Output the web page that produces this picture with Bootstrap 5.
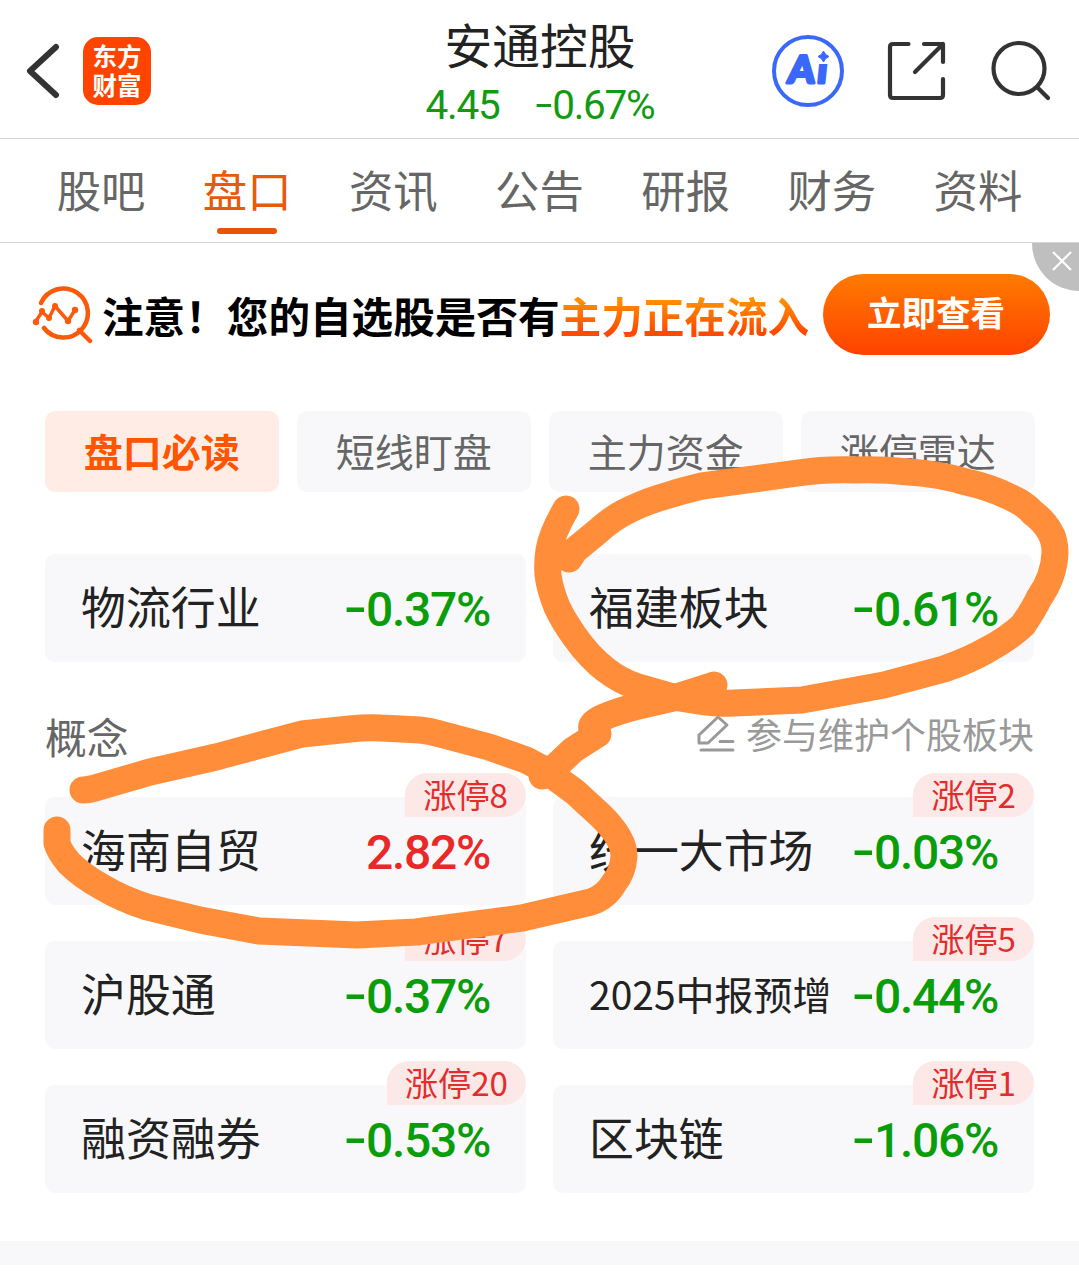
<!DOCTYPE html>
<html lang="zh-CN">
<head>
<meta charset="utf-8">
<meta name="viewport" content="width=device-width, initial-scale=1">
<title>安通控股</title>
<link href="https://cdn.jsdelivr.net/npm/bootstrap@5.3.0/dist/css/bootstrap.min.css" rel="stylesheet">
<style>
body{font-family:"Noto Sans CJK SC",sans-serif;color:#222;background:#fff;line-height:1;overflow:hidden}
.screen{width:1079px;height:1278px;overflow:hidden}
.topbar{height:139px;border-bottom:1px solid #d5d5d5;padding:0 28px 0 26px}
.side-box{width:330px;height:142px}
.left-box{width:333px}
.logo-box{width:68px;height:68px;border-radius:15px;background:#ff4400;color:#fff;font-weight:700;font-size:24.5px;line-height:29px;padding-top:4px;margin-left:23px}
.stock-name{font-size:47.7px;line-height:60px;padding-top:14px}
.quote{font-family:Roboto,"Noto Sans CJK SC",sans-serif;font-size:40.5px;line-height:44px;color:#129a12;gap:36px;margin-top:9px;letter-spacing:-1.3px}
.minus{display:inline-block;transform:translateY(-2px) scaleX(1.4);margin-left:3px;margin-right:3.5px}
.quote .minus{transform:translateY(-1px) scaleX(1.5);margin-right:4px}
.ai-icon{margin-left:51px}
.tabs-row{height:104px;border-bottom:1px solid #d5d5d5;padding:0 28px}
.tabs-row .nav-link{padding:0;font-size:44.4px;line-height:99px;color:#666;height:103px}
.tabs-row .nav-link.active{color:#e65a0c}
.tabs-row .nav-link.active::after{content:"";position:absolute;left:50%;margin-left:-30px;top:89px;width:60px;height:6px;border-radius:3px;background:#e85405}
.promo{height:168px;padding:0 29.5px 24.5px 32px}
.promo-text{font-size:41.6px;font-weight:700;color:#000;margin-left:9px;line-height:60px}
.hot{background:linear-gradient(#ff9000 25%,#ff4a00 78%);-webkit-background-clip:text;background-clip:text;color:transparent}
.promo-btn{width:227px;height:81px;border-radius:41px;background:linear-gradient(#ff7b00,#ff4200);color:#fff;font-size:34.5px;font-weight:700;line-height:75px}
.closer{top:0;right:0}
.pills{padding:0 44.5px 0 45px;gap:18.5px}
.pill-item{flex:1 1 0;height:81px;border-radius:10px;background:#f8f8fa;color:#666;font-size:39px;line-height:79px}
.pill-item.on{background:#ffede5;color:#ff5500;font-weight:700}
.cells{display:grid;grid-template-columns:481px 481px;column-gap:27px;row-gap:36px;padding:0 45px}
.cell{height:108px;border-radius:10px;background:#f8f8fa;padding:0 36px}
.cell-name{font-size:44.9px;line-height:104px;white-space:nowrap}
.cell-name.slim{font-size:39px}
.pct{font-family:Roboto,"Noto Sans CJK SC",sans-serif;font-size:48px;font-weight:500;line-height:111px;letter-spacing:-1.3px;color:#0a9d0a;white-space:nowrap}
.pct.up{color:#ea2828}
.limit{top:-24px;right:0;height:44px;border-radius:22px 22px 22px 0;background:#fde8e8;color:#e22d2d;font-size:33.2px;line-height:42px;padding:0 18px;white-space:nowrap}
.concept{height:135px;padding:0 45px}
.concept-title{font-size:41.8px;color:#666;line-height:60px;padding-top:44px}
.maintain{font-size:36px;color:#999;line-height:60px;padding-top:41px;gap:11px}
.band{height:24px;background:#f8f8fa;margin-top:48px}
.ink{left:0;top:0;pointer-events:none}
</style>
</head>
<body>
<div class="screen position-relative">
  <header class="topbar d-flex align-items-start">
    <div class="side-box left-box d-flex align-items-center">
      <svg width="34" height="56" viewBox="0 0 34 56" fill="none" stroke="#333" stroke-width="6" stroke-linecap="round" stroke-linejoin="round"><path d="M30 4 4 28 30 52"/></svg>
      <div class="logo-box text-center">东方<br>财富</div>
    </div>
    <div class="text-center flex-fill">
      <div class="stock-name">安通控股</div>
      <div class="quote d-flex justify-content-center"><span>4.45</span><span><span class="minus">-</span>0.67%</span></div>
    </div>
    <div class="side-box d-flex align-items-center">
      <svg class="ai-icon" width="72" height="72" viewBox="0 0 72 72"><text transform="translate(15 48) skewX(-6)" font-family="Lato" font-weight="900" font-size="38" letter-spacing="2.500" fill="#3a68fa" stroke="#3a68fa" stroke-width="3" stroke-linejoin="round">Ai</text><path d="M43 10H62V29H43Z" fill="#fff"/><path d="M51.500 16Q53 20 57 21.500Q53 23 51.500 27Q50 23 46 21.500Q50 20 51.500 16Z" fill="#3a68fa" stroke="#3a68fa"/><circle cx="36" cy="36" r="34" fill="none" stroke="#3a68fa" stroke-width="4"/></svg>
      <svg class="ms-auto" style="margin-right:43px" width="60" height="60" viewBox="0 0 60 60" fill="none" stroke="#333" stroke-width="4.200" stroke-linecap="round" stroke-linejoin="round"><path d="M21.500 3H6Q3 3 3 6V54Q3 57 6 57H53Q56 57 56 54V38M37 3H56V21M56 3 28 31"/></svg>
      <svg width="61" height="62" viewBox="0 0 61 62" fill="none" stroke="#333" stroke-width="4.200" stroke-linecap="round"><circle cx="29" cy="28.500" r="25.500"/><path d="M47.500 47.500 58 58"/></svg>
    </div>
  </header>
  <nav class="tabs-row nav nav-fill flex-nowrap">
    <a class="nav-link nav-item col">股吧</a>
    <a class="nav-link nav-item col active position-relative">盘口</a>
    <a class="nav-link nav-item col">资讯</a>
    <a class="nav-link nav-item col">公告</a>
    <a class="nav-link nav-item col">研报</a>
    <a class="nav-link nav-item col">财务</a>
    <a class="nav-link nav-item col">资料</a>
  </nav>
  <section class="promo d-flex align-items-center position-relative">
    <svg width="61" height="58" viewBox="0 0 61 58" fill="none" stroke="#fa5a0a" stroke-width="4.500" stroke-linecap="round" stroke-linejoin="round"><path d="M9 17A24.500 24.500 0 1 1 12 42M47 44 58 55"/><path stroke-width="3.500" d="M4 35 10 26 17 32 23 20 36 35 43 24"/><g fill="#fa5a0a" stroke="none"><circle cx="4" cy="36" r="3.200"/><circle cx="10" cy="25" r="3"/><circle cx="17" cy="32" r="3"/><circle cx="23" cy="20" r="3"/><circle cx="36" cy="35" r="3.200"/><circle cx="43" cy="24" r="3.200"/></g></svg>
    <div class="promo-text text-nowrap">注意！您的自选股是否有<span class="hot">主力正在流入</span></div>
    <div class="promo-btn text-center ms-auto">立即查看</div>
    <svg class="closer position-absolute" width="47" height="48" viewBox="0 0 47 48"><path d="M0 0H47V48A47 48 0 0 1 0 0Z" fill="#bfbfbf"/><path d="M21 9 39 27M39 9 21 27" stroke="#fff" stroke-width="2.300"/></svg>
  </section>
  <div class="pills d-flex text-center">
    <div class="pill-item on">盘口必读</div><div class="pill-item">短线盯盘</div><div class="pill-item">主力资金</div><div class="pill-item">涨停雷达</div>
  </div>
  <div class="cells" style="margin-top:62px">
    <div class="cell d-flex justify-content-between"><span class="cell-name">物流行业</span><span class="pct"><span class="minus">-</span>0.37%</span></div>
    <div class="cell d-flex justify-content-between"><span class="cell-name">福建板块</span><span class="pct"><span class="minus">-</span>0.61%</span></div>
  </div>
  <div class="concept d-flex justify-content-between align-items-start">
    <div class="concept-title">概念</div>
    <div class="maintain d-flex align-items-center"><svg width="38" height="38" viewBox="0 0 38 38" fill="none" stroke="#999" stroke-width="3" stroke-linecap="round" stroke-linejoin="round"><path d="M2 29V21L21 3 30 11 11 29ZM23 27.500H36M4 36H36"/></svg><span>参与维护个股板块</span></div>
  </div>
  <div class="cells">
    <div class="cell d-flex justify-content-between position-relative"><span class="cell-name">海南自贸</span><span class="pct up">2.82%</span><span class="limit position-absolute">涨停8</span></div>
    <div class="cell d-flex justify-content-between position-relative"><span class="cell-name">统一大市场</span><span class="pct"><span class="minus">-</span>0.03%</span><span class="limit position-absolute">涨停2</span></div>
    <div class="cell d-flex justify-content-between position-relative"><span class="cell-name">沪股通</span><span class="pct"><span class="minus">-</span>0.37%</span><span class="limit position-absolute">涨停7</span></div>
    <div class="cell d-flex justify-content-between position-relative"><span class="cell-name slim">2025中报预增</span><span class="pct"><span class="minus">-</span>0.44%</span><span class="limit position-absolute">涨停5</span></div>
    <div class="cell d-flex justify-content-between position-relative"><span class="cell-name">融资融券</span><span class="pct"><span class="minus">-</span>0.53%</span><span class="limit position-absolute">涨停20</span></div>
    <div class="cell d-flex justify-content-between position-relative"><span class="cell-name">区块链</span><span class="pct"><span class="minus">-</span>1.06%</span><span class="limit position-absolute">涨停1</span></div>
  </div>
  <div class="band"></div>
  <!-- hand-drawn marker strokes over the page -->
  <svg class="ink position-absolute" width="1079" height="1278" viewBox="0 0 1079 1278" fill="none" stroke="#ff8d3a" stroke-width="27" stroke-linecap="round" stroke-linejoin="round">
    <path d="M566 509Q552 533 549 550Q547 562 548 575Q550 590 557 607Q563 620 575 637Q590 658 606 670Q620 681 638 687L673 697L705 702Q718 704 734 703L802 700L884 685L944 669Q970 660 987 650Q1008 639 1023 625Q1034 609 1039 598Q1054 577 1055 553Q1055 540 1050 532Q1044 521 1033 513Q1025 504 1012 498Q990 487 966 482Q940 474 909 472Q880 469 855 470Q825 469 798 473L702 486Q680 491 659 498Q640 504 623 513Q610 520 597 532L575 550 569 559"/>
    <path d="M714 685 673 698 638 706Q618 711 604 717 590 723 592 730L598 734 573 750 556 766 542 776"/>
    <path d="M83 790Q88 790 95 788L150 772 216 757 302 734 350 729Q368 727 381 728L420 730Q430 731 440 734L489 747 526 760 545 770 575 792 600 815Q624 838 624 856Q623 872 614 883 606 897 591 902L522 918 416 932 357 935 259 931 200 920 147 907Q122 899 102 887 82 876 69 863 59 851 57 843L57 830"/>
  </svg>
</div>
<script src="https://cdn.jsdelivr.net/npm/bootstrap@5.3.0/dist/js/bootstrap.bundle.min.js"></script>
</body>
</html>
